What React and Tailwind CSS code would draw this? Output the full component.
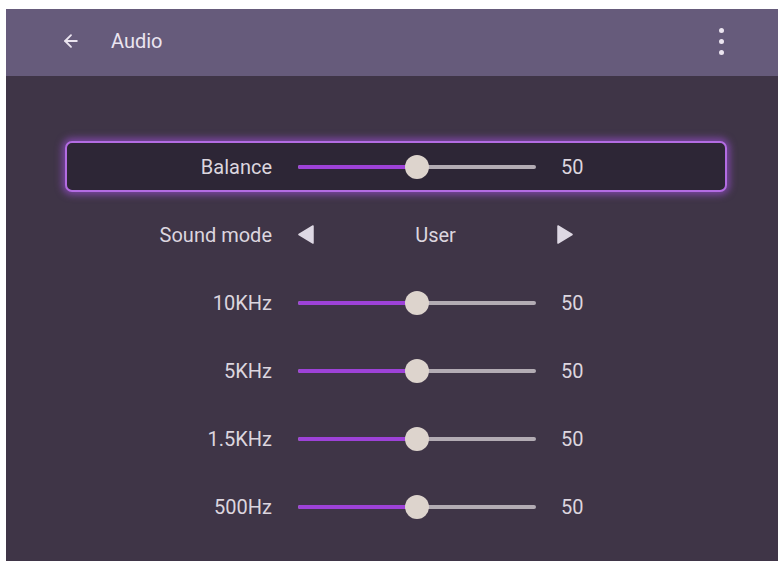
import React from "react";

function Slider({ value = 50 }) {
  return (
    <div className="relative w-[238px] h-[24px] flex items-center">
      <div className="h-[4px] w-full rounded-full bg-[#b3acb4]" />
      <div
        className="absolute left-0 h-[4px] rounded-full bg-[#9d42d8]"
        style={{ width: `${value}%` }}
      />
      <div
        className="absolute w-[24px] h-[24px] rounded-full bg-[#ddd4cd] -translate-x-1/2"
        style={{ left: `${value}%` }}
      />
    </div>
  );
}

function Row({ label, selected, children }) {
  return (
    <div
      className={
        "flex items-center h-[51px] rounded-[7px] border-2 " +
        (selected
          ? "border-[#b36ce3] bg-[#2d2636] shadow-[0_0_7px_3px_rgba(160,80,220,0.6)]"
          : "border-transparent")
      }
    >
      <div className="w-[205px] text-right">{label}</div>
      <div className="ml-[26px]">{children}</div>
    </div>
  );
}

function SliderRow({ label, selected }) {
  return (
    <Row label={label} selected={selected}>
      <div className="flex items-center">
        <Slider value={50} />
        <span className="ml-[25px]">50</span>
      </div>
    </Row>
  );
}

export default function App() {
  return (
    <div className="w-[784px] h-[565px] bg-white pt-[9px] pl-[6px]" style={{ fontFamily: "Roboto, 'Noto Sans', sans-serif" }}>
      <div className="w-[772px] h-[552px] bg-[#3f3547] flex flex-col">
        <div className="h-[67px] bg-[#665b7b] flex items-center pl-[55px] pr-[54px] pb-[3px] text-[#ebe5f0]">
          <svg width="20" height="20" viewBox="0 0 24 24" fill="none" stroke="currentColor" strokeWidth="2.2" strokeLinecap="round" strokeLinejoin="round">
            <path d="M19 12H5" />
            <path d="M12 19l-7-7 7-7" />
          </svg>
          <span className="ml-[30px] text-[20px]">Audio</span>
          <div className="ml-auto flex flex-col gap-[6px] items-center">
            <div className="w-[5px] h-[5px] rounded-full bg-[#ebe5f0]" />
            <div className="w-[5px] h-[5px] rounded-full bg-[#ebe5f0]" />
            <div className="w-[5px] h-[5px] rounded-full bg-[#ebe5f0]" />
          </div>
        </div>
        <div className="mt-[65px] ml-[59px] w-[662px] flex flex-col gap-[17px] text-[20px] text-[#dcd6df]">
          <SliderRow label="Balance" selected />
          <Row label="Sound mode">
            <div className="w-[275px] flex items-center justify-between">
              <svg width="16" height="19" viewBox="0 0 16 19">
                <path d="M15 1 L1 9.5 L15 18 Z" fill="#ded8e4" stroke="#ded8e4" strokeWidth="1.5" strokeLinejoin="round" />
              </svg>
              <span>User</span>
              <svg width="16" height="19" viewBox="0 0 16 19">
                <path d="M1 1 L15 9.5 L1 18 Z" fill="#ded8e4" stroke="#ded8e4" strokeWidth="1.5" strokeLinejoin="round" />
              </svg>
            </div>
          </Row>
          <SliderRow label="10KHz" />
          <SliderRow label="5KHz" />
          <SliderRow label="1.5KHz" />
          <SliderRow label="500Hz" />
        </div>
      </div>
    </div>
  );
}
